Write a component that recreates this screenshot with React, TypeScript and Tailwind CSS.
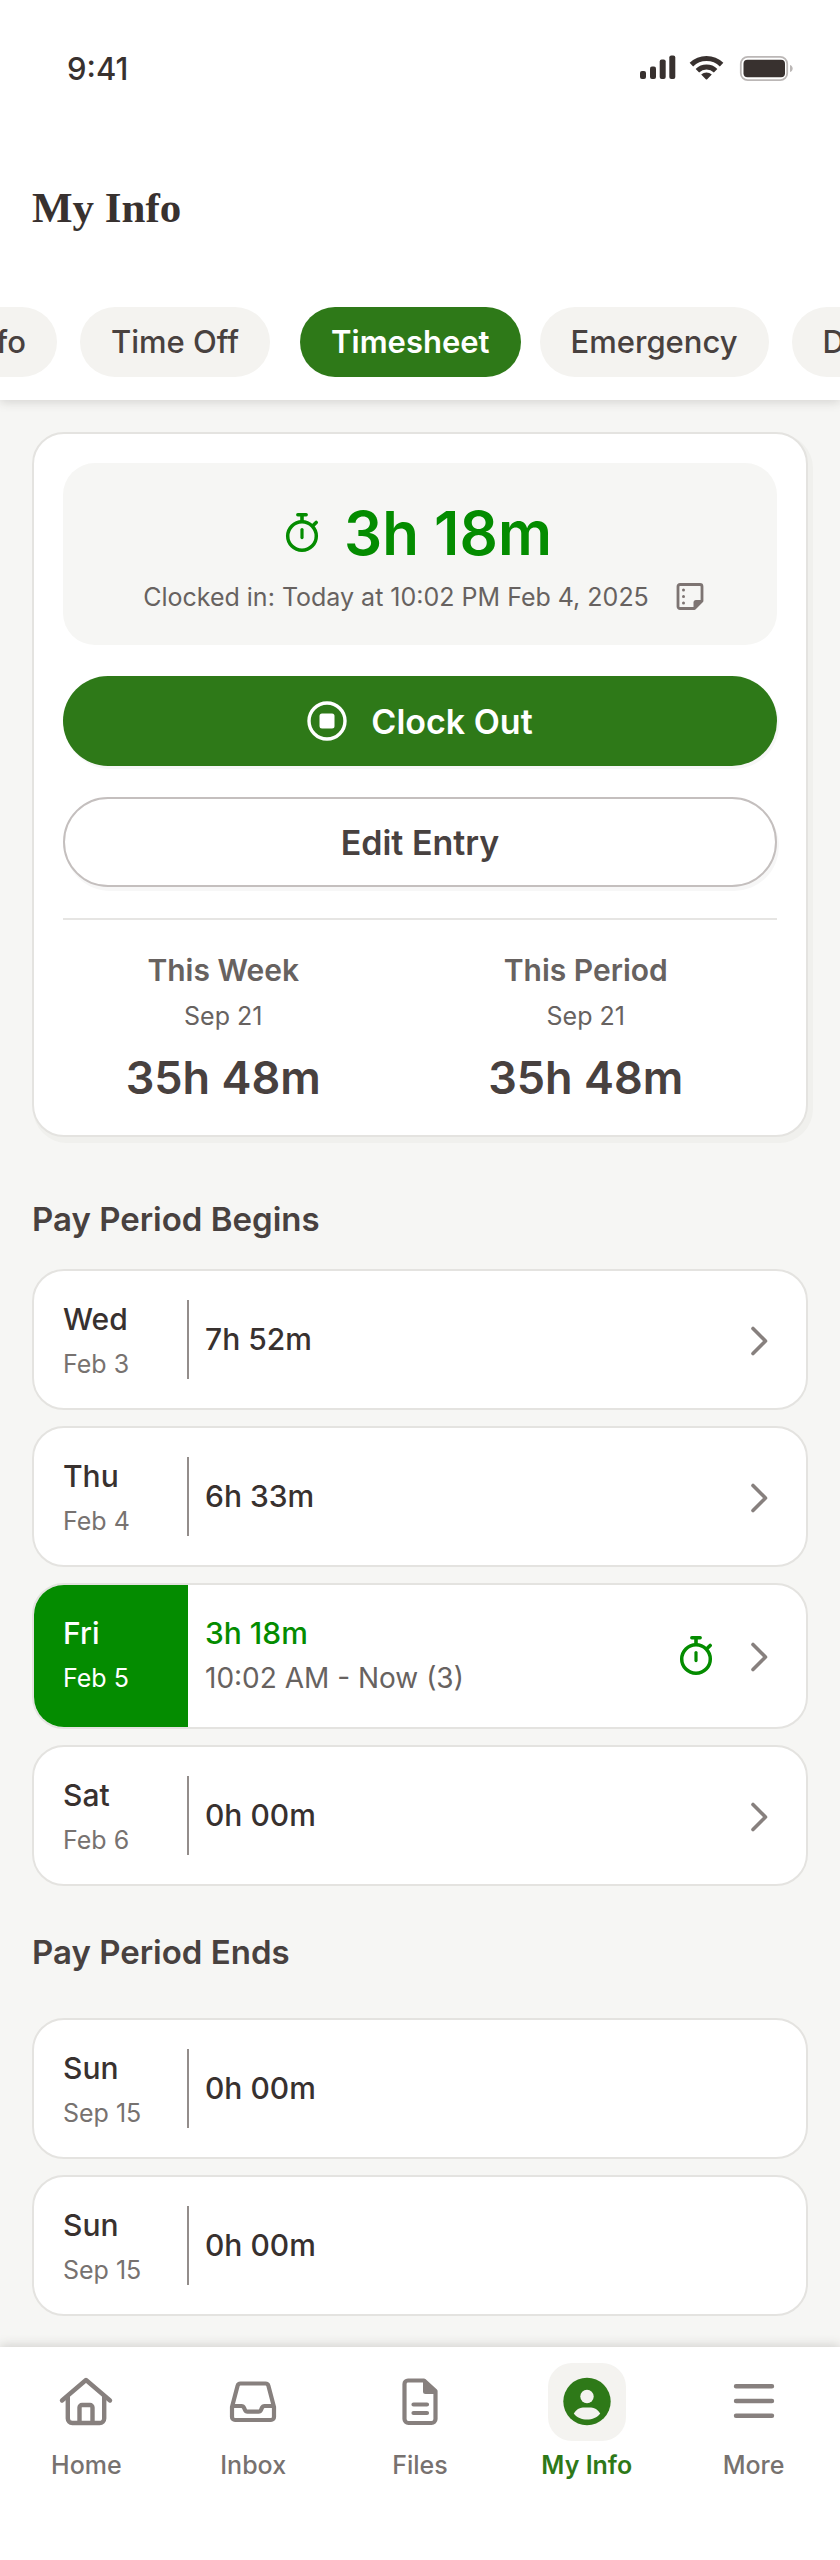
import React from "react";

const chips = [
  { label: "Job Info", spacing: "" },
  { label: "Time Off", spacing: "ml-[23px]" },
  { label: "Timesheet", spacing: "ml-[30px]", active: true },
  { label: "Emergency", spacing: "ml-[19px]" },
  { label: "Documents", spacing: "ml-[23px]" },
];

type Day = { day: string; date: string; time: string; range?: string; link?: boolean };

const begins: Day[] = [
  { day: "Wed", date: "Feb 3", time: "7h 52m", link: true },
  { day: "Thu", date: "Feb 4", time: "6h 33m", link: true },
  { day: "Fri", date: "Feb 5", time: "3h 18m", range: "10:02 AM - Now (3)", link: true },
  { day: "Sat", date: "Feb 6", time: "0h 00m", link: true },
];

const ends: Day[] = [
  { day: "Sun", date: "Sep 15", time: "0h 00m" },
  { day: "Sun", date: "Sep 15", time: "0h 00m" },
];

function StatusIcons() {
  return (
    <svg className="h-[28px] w-[156px]" viewBox="0 0 156 28" fill="#38312f" aria-hidden="true">
      <rect x="2" y="16" width="6" height="8" rx="2" />
      <rect x="12" y="11.5" width="6" height="12.5" rx="2" />
      <rect x="21.7" y="4.5" width="6" height="19.5" rx="2" />
      <rect x="31.3" y="0.500" width="6" height="23.5" rx="2" />
      <g fill="none" stroke="#38312f" strokeWidth="5">
        <path d="M53.4 9.600a21.600 21.600 0 0 1 30.200 0" />
        <path d="M59.4 15.800a13 13 0 0 1 18.200 0" />
      </g>
      <path d="M63.2 19.600c3-2.800 7.600-2.800 10.600 0L69.200 24.200q-.7.700-1.400 0z" />
      <rect x="102.8" y="1.800" width="46.4" height="23.400" rx="7" fill="none" stroke="#bbb7b6" strokeWidth="1.8" />
      <rect x="105.500" y="4.700" width="41.500" height="17.500" rx="4" />
      <path d="M152 10v7c3.600-1 3.600-6 0-7z" fill="#bbb7b6" />
    </svg>
  );
}

function Stopwatch() {
  return (
    <svg className="h-[42px] w-[36px] shrink-0" viewBox="0 0 36 42" fill="none" stroke="#048c00" strokeLinecap="round" aria-hidden="true">
      <circle cx="18" cy="24" r="14.3" strokeWidth="3.5" />
      <path d="M13.8 2.8h8.4" strokeWidth="3.4" />
      <path d="M18 4v5" strokeWidth="3.6" />
      <path d="M29.8 12.8l2.4-2.4" strokeWidth="3.6" />
      <path d="M18 17.6v8" strokeWidth="3.2" />
    </svg>
  );
}

function Note() {
  return (
    <svg className="h-[30px] w-[30px] shrink-0" viewBox="0 0 30 30" aria-hidden="true">
      <path d="M5 2.500h20a2 2 0 0 1 2 2v14.500L19.500 26.500H5a2 2 0 0 1-2-2V4.500a2 2 0 0 1 2-2z" fill="none" stroke="#7d7472" strokeWidth="2.8" strokeLinejoin="round" />
      <path d="M18.500 26.500v-6a2.500 2.500 0 0 1 2.500-2.500h6z" fill="#7d7472" />
      <g fill="#7d7472">
        <circle cx="8.500" cy="8" r="1.5" />
        <circle cx="8.500" cy="14.500" r="1.5" />
        <circle cx="8.500" cy="21" r="1.5" />
      </g>
    </svg>
  );
}

function Chevron() {
  return (
    <svg className="h-[32px] w-[24px] shrink-0" viewBox="0 0 24 32" fill="none" stroke="#87807e" strokeWidth="3.6" strokeLinecap="round" strokeLinejoin="round" aria-hidden="true">
      <path d="M5 4.500l12.500 12.500L5 29.500" />
    </svg>
  );
}

const navSvg = "h-[52px] w-[56px]";

const nav = [
  {
    label: "Home",
    icon: (
      <svg className={navSvg} viewBox="0 0 56 52" fill="none" stroke="#87807e" strokeWidth="4.4" strokeLinecap="round" strokeLinejoin="round" aria-hidden="true">
        <path d="M4 24.500L28 4l24 20.500" />
        <path d="M9.800 20.500V42.500a4.500 4.500 0 0 0 4.500 4.500h27.400a4.500 4.500 0 0 0 4.500-4.500V20.500" />
        <path d="M21.500 46V31.500a2.500 2.500 0 0 1 2.500-2.500h8a2.500 2.500 0 0 1 2.500 2.500V46" />
      </svg>
    ),
  },
  {
    label: "Inbox",
    icon: (
      <svg className={navSvg} viewBox="0 0 56 52" fill="none" stroke="#87807e" strokeWidth="4.200" strokeLinejoin="round" aria-hidden="true">
        <path d="M15.500 7.500h25a3 3 0 0 1 2.900 2.200L49 31v10a3 3 0 0 1-3 3H10a3 3 0 0 1-3-3V31l5.600-21.300a3 3 0 0 1 2.900-2.200z" />
        <path d="M7 30h9.500q1.800 0 2.500 1.700l1 2.300q.7 1.700 2.500 1.700h11q1.800 0 2.500-1.700l1-2.300q.7-1.700 2.500-1.700H49" />
      </svg>
    ),
  },
  {
    label: "Files",
    icon: (
      <svg className={navSvg} viewBox="0 0 56 52" fill="none" stroke="#87807e" strokeWidth="4.200" strokeLinecap="round" strokeLinejoin="round" aria-hidden="true">
        <path d="M16 4.500h16L43.500 15V43a4 4 0 0 1-4 4H16.500a4 4 0 0 1-4-4V8a3.500 3.500 0 0 1 3.500-3.500z" />
        <path d="M32 5v10.500a1.500 1.500 0 0 0 1.500 1.500h9.500z" fill="#87807e" strokeWidth="2" />
        <path d="M21.500 28.500h13.500M21.500 37h13.500" />
      </svg>
    ),
  },
  {
    label: "My Info",
    active: true,
    icon: (
      <svg className={navSvg} viewBox="0 0 56 52" aria-hidden="true">
        <circle cx="28" cy="25.500" r="23.700" fill="#2e7918" />
        <circle cx="28" cy="20.500" r="6.700" fill="#f4f3f0" />
        <path d="M14.800 37.500c2.200-4 6-6 9-6h8.400c3 0 6.800 2 9 6-3 4-8 6-13.200 6s-10.200-2-13.200-6z" fill="#f4f3f0" />
      </svg>
    ),
  },
  {
    label: "More",
    icon: (
      <svg className={navSvg} viewBox="0 0 56 52" fill="none" stroke="#87807e" strokeWidth="4.400" strokeLinecap="round" aria-hidden="true">
        <path d="M10 10.300h36M10 25h36M10 39.700h36" />
      </svg>
    ),
  },
];

function DayRow({ day, date, time, range, link }: Day) {
  const active = Boolean(range);
  return (
    <li>
      <a
        href="#day"
        className={
          "flex overflow-hidden rounded-[32px] border-2 border-[#e4e3e0] bg-white " +
          (active ? "h-[146px]" : "h-[141px] items-center")
        }
      >
        <div
          className={
            "flex shrink-0 flex-col pl-[29px] " +
            (active
              ? "w-[154px] bg-[#048c00] pt-[29px] text-white"
              : "h-[79px] w-[155px] border-r-2 border-[#938d8b] text-[#38312f]")
          }
        >
          <span className="text-[30px] leading-[38px] font-medium">{day}</span>
          <span className={"mt-[6px] text-[25px] leading-[40px] " + (active ? "" : "text-[#777270]")}>{date}</span>
        </div>
        <div className={"flex flex-1 flex-col " + (active ? "pt-[29px] pl-[17px]" : "pb-[2px] pl-[16px]")}>
          <span className={"text-[30px] leading-[38px] font-medium " + (active ? "text-[#048c00]" : "text-[#38312f]")}>{time}</span>
          {range && <span className="mt-[6px] text-[28px] leading-[40px] text-[#676260]">{range}</span>}
        </div>
        {link && (
          <div className="flex items-center gap-[34px] self-center pr-[34px]">
            {active && <Stopwatch />}
            <Chevron />
          </div>
        )}
      </a>
    </li>
  );
}

function Total({ title }: { title: string }) {
  return (
    <div className="flex flex-col items-center">
      <h3 className="text-[30px] leading-[40px] font-semibold text-[#676260]">{title}</h3>
      <p className="mt-[6px] text-[25px] leading-[40px] text-[#676260]">Sep 21</p>
      <p className="mt-[12px] text-[45px] leading-[60px] font-semibold text-[#48413f]">35h 48m</p>
    </div>
  );
}

export default function App() {
  return (
    <div className="flex min-h-screen flex-col overflow-x-hidden bg-[#f6f6f4] font-['Inter',sans-serif]">
      <header className="relative bg-white pb-[23px] shadow-[0_2px_10px_rgba(56,49,47,0.18)]">
        <div className="flex items-center justify-between pt-[48px] pr-[46px] pl-[67px]">
          <span className="text-[31px] leading-[42px] font-medium text-[#38312f]">9:41</span>
          <StatusIcons />
        </div>
        <h1 className="mt-[90px] ml-[32px] font-['Liberation_Serif',serif] text-[43px] leading-[56px] font-bold text-[#38312f]">My Info</h1>
        <nav className="mt-[71px] flex overflow-hidden">
          <div className="flex w-[57px] shrink-0 justify-end">
            <button className="h-[70px] shrink-0 rounded-full bg-[#f4f3f0] px-[31px] text-[31px] font-medium whitespace-nowrap text-[#48413f]">
              {chips[0].label}
            </button>
          </div>
          {chips.slice(1).map((c) => (
            <button
              key={c.label}
              className={
                "h-[70px] shrink-0 rounded-full px-[31px] text-[31px] whitespace-nowrap " +
                c.spacing +
                (c.active ? " bg-[#2e7918] font-semibold text-white" : " bg-[#f4f3f0] font-medium text-[#48413f]")
              }
            >
              {c.label}
            </button>
          ))}
        </nav>
      </header>

      <main className="flex-1 px-[32px] pt-[32px] pb-[30px]">
        <section className="rounded-[32px] border-2 border-[#e4e3e0] bg-white px-[29px] pt-[29px] pb-[27px] shadow-[3px_4px_0_2px_rgba(56,49,47,0.03)]">
          <div className="flex flex-col items-center rounded-[32px] bg-[#f6f6f4] pt-[34px] pb-[26px]">
            <div className="flex items-center gap-[24px] pr-1">
              <Stopwatch />
              <span className="text-[60px] leading-[72px] font-semibold text-[#048c00]">3h 18m</span>
            </div>
            <div className="mt-[6px] flex items-center gap-[26px] pl-2">
              <span className="text-[25px] leading-[44px] text-[#676260]">Clocked in: Today at 10:02 PM Feb 4, 2025</span>
              <Note />
            </div>
          </div>
          <button className="mt-[31px] flex h-[90px] w-full items-center justify-center gap-[24px] rounded-full bg-[#2e7918] text-[34px] font-semibold text-white shadow-[2px_3px_0_rgba(56,49,47,0.04)]">
            <svg className="h-[40px] w-[40px]" viewBox="0 0 40 40" aria-hidden="true">
              <circle cx="20" cy="20" r="18" fill="none" stroke="#fff" strokeWidth="3.400" />
              <rect x="12.500" y="12.500" width="15" height="15" rx="2.500" fill="#fff" />
            </svg>
            Clock Out
          </button>
          <button className="mt-[31px] h-[90px] w-full rounded-full border-2 border-[#c4bfbe] bg-white text-[34px] font-semibold text-[#48413f] shadow-[2px_4px_0_rgba(56,49,47,0.04)]">
            Edit Entry
          </button>
          <div className="mt-[31px] grid grid-cols-2 gap-[42px] border-t-2 border-[#e6e5e3] pt-[30px] pr-[31px]">
            <Total title="This Week" />
            <Total title="This Period" />
          </div>
        </section>

        <h2 className="mt-[60px] text-[33px] leading-[44px] font-semibold text-[#48413f]">Pay Period Begins</h2>
        <ul className="mt-[28px] flex flex-col gap-[16px]">
          {begins.map((d) => (
            <DayRow key={d.date} {...d} />
          ))}
        </ul>
        <h2 className="mt-[44px] text-[33px] leading-[44px] font-semibold text-[#48413f]">Pay Period Ends</h2>
        <ul className="mt-[44px] flex flex-col gap-[16px]">
          {ends.map((d, i) => (
            <DayRow key={i} {...d} />
          ))}
        </ul>
      </main>

      <nav className="relative grid grid-cols-5 bg-white px-[3px] pt-[16px] pb-[75px] shadow-[0_-2px_10px_rgba(56,49,47,0.18)]">
        {nav.map((n) => (
          <a key={n.label} href="#nav" className="flex flex-col items-center">
            <span className={"flex h-[78px] w-[78px] items-center justify-center rounded-[24px] " + (n.active ? "bg-[#f4f3f0]" : "")}>
              {n.icon}
            </span>
            <span className={"mt-[4px] text-[25px] leading-[40px] " + (n.active ? "font-semibold text-[#2e7918]" : "font-medium text-[#777270]")}>
              {n.label}
            </span>
          </a>
        ))}
      </nav>
    </div>
  );
}
